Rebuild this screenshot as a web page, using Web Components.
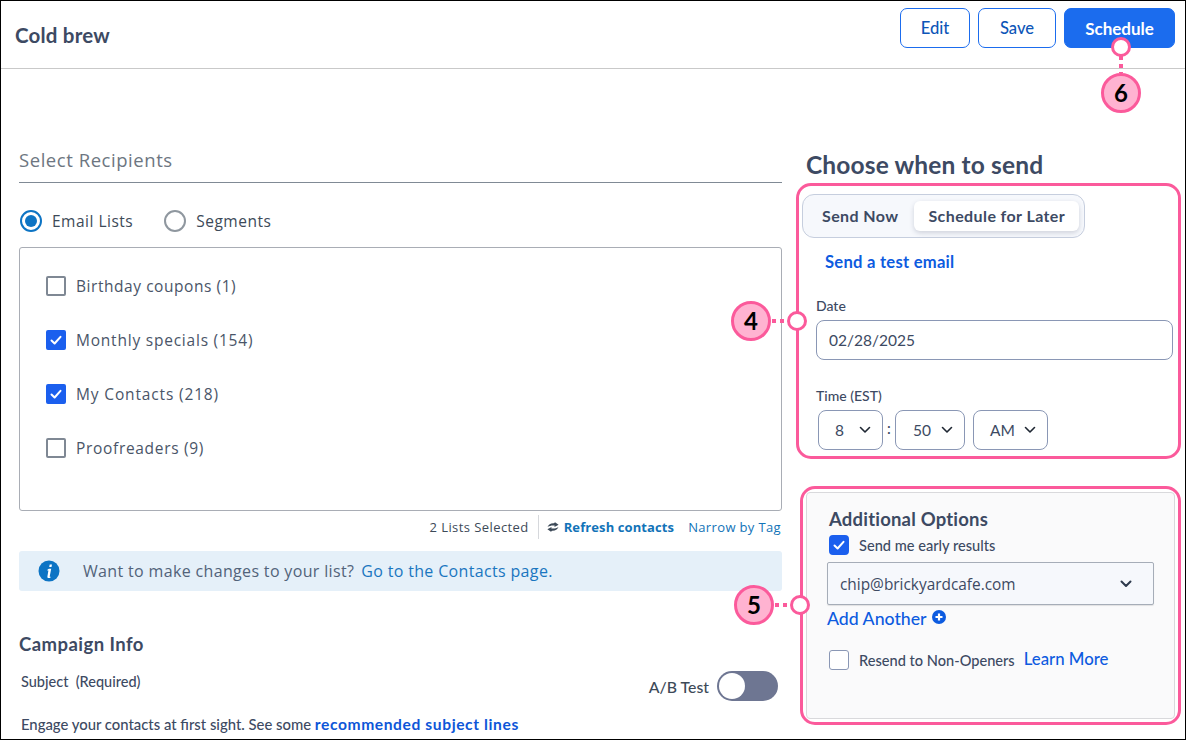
<!DOCTYPE html>
<html lang="en"><head><meta charset="utf-8"><title>Cold brew</title>
<style>
html,body{margin:0;padding:0;background:#fff}
body{width:1186px;height:740px;overflow:hidden;font-family:"Lato","Open Sans",sans-serif;color:#3d4a63}
</style></head><body>
<cc-app></cc-app>
<script>
const sans='"Lato","Open Sans",sans-serif', open='"Open Sans","Noto Sans",sans-serif';
function def(name,html){
  customElements.define(name,class extends HTMLElement{
    constructor(){super();this.attachShadow({mode:'open'}).innerHTML=html;}
  });
}
def('cc-button',`<style>
:host{display:inline-flex;align-items:center;justify-content:center;box-sizing:border-box;height:40px;border:1px solid #1b6cee;border-radius:7px;font:500 16.6px ${sans};color:#0d56b8;background:#fff;flex:none}
:host([primary]){background:#1b6cee;color:#fff;font-weight:700;font-size:17px}
</style><slot></slot>`);
def('cc-header',`<style>
:host{display:flex;align-items:flex-start;justify-content:space-between;box-sizing:border-box;height:68px;border-bottom:1px solid #c9c9c9;padding:7px 10px 0 14px}
.t{font:700 20.5px/40px ${sans};letter-spacing:.2px;color:#3d4a63;margin-top:7px}
.b{display:flex;gap:8px}
</style><div class="t"><slot name="title"></slot></div><div class="b"><slot></slot></div>`);
def('cc-check',`<style>
:host{display:inline-flex;align-items:center;gap:var(--gap,10px);font:var(--font,400 15.5px ${open});letter-spacing:var(--ls,.55px);color:var(--color,#4a5568)}
.b{box-sizing:border-box;width:20px;height:20px;border-radius:var(--r,2px);border:2px solid #7f8894;background:#fff;display:flex;align-items:center;justify-content:center;flex:none}
:host([on]) .b{background:#1b5fee;border-color:#1b5fee}
:host([soft]) .b{border:1px solid #8a97b5;border-radius:3px}
svg{display:none;width:14px;height:14px}:host([on]) svg{display:block}
</style><span class="b"><svg viewBox="0 0 14 14" fill="none" stroke="#fff" stroke-width="2" stroke-linecap="round" stroke-linejoin="round"><path d="M2.5 7.5 5.6 10.5 11.5 3.8"/></svg></span><span><slot></slot></span>`);
def('cc-radio',`<style>
:host{display:inline-flex;align-items:center;gap:10px;font:400 15.5px ${open};letter-spacing:.5px;color:#3d4a58}
.r{box-sizing:border-box;width:22px;height:22px;border-radius:50%;border:2px solid #8f979f;background:#fff;position:relative}
:host([on]) .r{border-color:#0d74c4}
:host([on]) .r::after{content:"";position:absolute;inset:3px;border-radius:50%;background:#0d74c4}
</style><span class="r"></span><span><slot></slot></span>`);
def('cc-recipients',`<style>
:host{display:block;width:763px}
h2{margin:0;font:400 18.5px/24px ${open};letter-spacing:.55px;color:#6d7681;padding-bottom:10px;border-bottom:1px solid #808a95}
.radios{display:flex;gap:31px;padding:25px 0 0 1px;height:26px;align-items:center}
.list{box-sizing:border-box;height:264px;margin-top:13px;border:1px solid #a9adb5;border-radius:3px;padding:28px 26px;display:flex;flex-direction:column;gap:34px}
.list ::slotted(cc-check){height:20px}
.meta{display:flex;justify-content:flex-end;align-items:center;height:24px;margin-top:4px;padding-right:1px;font:400 13px ${open};letter-spacing:.42px;color:#3d4a58}
.sep{width:1px;height:24px;background:#d6d8dc;margin:0 8px 0 9px}
.ref{display:flex;align-items:center;gap:5px;font-weight:700;letter-spacing:.1px;color:#1273b8;margin-right:14px}
.nar{color:#1273b8;letter-spacing:.36px}
.info{display:flex;align-items:center;height:40px;margin-top:12px;background:#e5f0f9;border-radius:3px;padding-left:19px;font:400 16px ${open};letter-spacing:.34px;color:#52637a}
.info svg{width:22px;height:22px;margin-right:23px}
.info a{color:#1a76c0;margin-left:7px}
</style>
<h2>Select Recipients</h2>
<div class="radios"><cc-radio on>Email Lists</cc-radio><cc-radio>Segments</cc-radio></div>
<div class="list"><slot></slot></div>
<div class="meta"><span>2 Lists Selected</span><span class="sep"></span>
<span class="ref"><svg width="12" height="10" viewBox="0 0 12 10" fill="#3d4a58"><path id="a" d="M.5 5C1.5 2.5 4 1 7 1.3L8 .2 11.6 2.8 7.5 5 7.6 3.6C5 3.2 3 3.6.5 5Z"/><path d="M11.5 5C10.5 7.5 8 9 5 8.7L4 9.8.4 7.2 4.5 5 4.4 6.4C7 6.8 9 6.4 11.5 5Z"/></svg>Refresh contacts</span>
<span class="nar">Narrow by Tag</span></div>
<div class="info"><svg viewBox="0 0 22 22"><circle cx="11" cy="11" r="10.5" fill="#0d74c4"/><path d="M11.7 4.6h2.3l-.5 2.3h-2.3ZM10.9 8.8h2.3l-1.5 7.6c-.1.5.3.5.9.3l-.2 1.1c-1.8.7-3.3.2-3-1.3l1-5.9-1 .1.2-1.3Z" fill="#fff"/></svg>Want to make changes to your list? <a>Go to the Contacts page.</a></div>`);
def('cc-campaign',`<style>
:host{display:block;width:763px;margin-top:41px}
h3{margin:0;font:700 18.5px/24px ${sans};letter-spacing:.45px;color:#3d4a63}
.row{display:flex;justify-content:space-between;align-items:center;height:30px;margin-top:15px;padding:0 4px 0 2px;font:500 14.5px ${sans};color:#3d4a63}
.row .l{margin-top:-10px}
.ab{display:flex;align-items:center;gap:8px;font:500 15.8px ${sans};color:#3d4a58}
.tg{box-sizing:border-box;width:61px;height:30px;border-radius:15px;background:#6e7692;padding:2px}
.tg i{display:block;width:26px;height:26px;border-radius:50%;background:#fff}
.hint{margin:13px 0 0 2px;font:500 14.85px/20px ${sans};color:#3d4a63}
.hint a{color:#0d56d8;font-weight:700;font-size:15.6px;letter-spacing:.6px}
</style><h3>Campaign Info</h3>
<div class="row"><span class="l">Subject&nbsp; (Required)</span><span class="ab">A/B Test<span class="tg"><i></i></span></span></div>
<p class="hint">Engage your contacts at first sight. See some <a>recommended subject lines</a></p>`);
def('cc-select',`<style>
:host{display:inline-flex;align-items:center;justify-content:space-between;box-sizing:border-box;height:40px;border:1px solid #8a97b5;border-radius:8px;font:400 15.5px ${sans};color:#3d4a63;padding:0 11px 0 var(--pl,16px);background:#fff;flex:none}
svg{width:12px;height:8px}
</style><slot></slot><svg viewBox="0 0 12 8" fill="none" stroke="#1f2733" stroke-width="1.6" stroke-linecap="round" stroke-linejoin="round"><path d="M1.5 1.5 6 6l4.5-4.5"/></svg>`);
def('cc-when',`<style>
:host{display:block;box-sizing:border-box;height:276px;border:3px solid #fb5a9b;border-radius:15px;padding:8px 5px 0 3px}
.seg{display:inline-flex;box-sizing:border-box;height:44px;width:283px;background:#f6f8fc;border:1px solid #c6cede;border-radius:12px;padding:6px;align-items:center;font:700 16px ${sans};letter-spacing:.4px;color:#3d4a63}
.seg span{height:30px;line-height:29px;padding:0 13px;white-space:nowrap}
.seg .on{background:#fff;border-radius:6px;box-shadow:0 2px 5px rgba(50,60,90,.2);margin-left:3px;padding:0 14px}
.test{display:block;margin:14px 0 0 23px;font:700 16.6px/20px ${sans};letter-spacing:.25px;color:#0d5be0}
label{display:block;font:500 14px/18px ${sans};color:#3d4a63;margin-left:14px}
.d{margin-top:25px}
.date{display:flex;align-items:center;box-sizing:border-box;margin:5px 0 0 14px;height:40px;border:1px solid #8a97b5;border-radius:8px;padding-left:12px;font:400 15.5px ${sans};color:#3d4a63}
.t{margin-top:27px}
.sel{display:flex;align-items:center;margin:5px 0 0 16px}
.sel span{width:12px;text-align:center;font:500 15px ${sans};margin-top:-4px}
</style>
<div class="seg"><span>Send Now</span><span class="on">Schedule for Later</span></div>
<a class="test">Send a test email</a>
<label class="d">Date</label><div class="date">02/28/2025</div>
<label class="t">Time (EST)</label>
<div class="sel"><cc-select style="width:65px">8</cc-select><span>:</span><cc-select style="width:70px;--pl:17px">50</cc-select><cc-select style="width:75px;margin-left:8px">AM</cc-select></div>`);
def('cc-options',`<style>
:host{display:block;box-sizing:border-box;height:239px;border:3px solid #fb5a9b;border-radius:15px;padding:3px;margin-top:27px}
.in{box-sizing:border-box;height:100%;background:#fafafb;border:1px solid #d9d9dc;border-radius:4px;padding:14px 20px 0 20px}
h3{margin:0 0 0 2px;font:700 18.5px/24px ${sans};letter-spacing:.2px;color:#3d4a63}
cc-check{--font:500 14.6px ${sans};--color:#3d4a63;--gap:10px;--ls:0;--r:4px}
.c1{margin:4px 0 0 2px;display:flex}
.drop{display:flex;align-items:center;justify-content:space-between;box-sizing:border-box;height:43px;margin-top:7px;background:#f6f8fc;border:1px solid #a6adb8;border-radius:2px;box-shadow:0 1px 1px rgba(0,0,0,.1);padding:0 21px 0 12px;font:400 15.4px ${open};color:#3d4a63}
.drop span{margin-top:2px}
.add{display:flex;align-items:center;gap:5px;margin-top:0;height:26px;font:500 17.7px ${sans};color:#0d5be0}
.add svg{width:14px;height:14px;margin-top:-3px}
.c2{display:flex;align-items:center;margin:19px 0 0 2px}
.c2 a{font:500 16.8px ${sans};color:#0d5be0;margin:-3px 0 0 9px}
</style><div class="in"><h3>Additional Options</h3>
<div class="c1"><cc-check on>Send me early results</cc-check></div>
<div class="drop"><span>chip@brickyardcafe.com</span><svg width="12" height="8" viewBox="0 0 12 8" fill="none" stroke="#2e3a4d" stroke-width="2" stroke-linecap="round" stroke-linejoin="round"><path d="M1.5 1.5 6 6l4.5-4.5"/></svg></div>
<div class="add">Add Another<svg viewBox="0 0 14 14"><circle cx="7" cy="7" r="7" fill="#0d5be0"/><path d="M7 3.5v7M3.5 7h7" stroke="#fff" stroke-width="2.2"/></svg></div>
<div class="c2"><cc-check soft>Resend to Non-Openers</cc-check><a>Learn More</a></div></div>`);
def('cc-callout',`<style>
:host{position:absolute;display:block;left:var(--x);top:var(--y);width:0;height:0;--p:#fb5a9b}
.n{position:absolute;box-sizing:border-box;left:var(--nx);top:var(--ny);width:40px;height:40px;margin:-20px;border-radius:50%;border:3px solid var(--p);background:#ffb3d1;color:#000;font:700 24px/34px ${sans};text-align:center}
.o{position:absolute;box-sizing:border-box;left:0;top:0;width:20px;height:20px;margin:-10px;border-radius:50%;border:3px solid var(--p);background:#fff}
.l{position:absolute}
:host([h]) .l{left:calc(var(--nx) + 20px);top:-2px;height:4px;width:calc(-1*var(--nx) - 28px);background:repeating-linear-gradient(90deg,transparent 0 1px,var(--p) 1px 5px,transparent 5px 8px)}
:host([v]) .l{top:8px;left:-2px;width:4px;height:calc(var(--ny) - 28px);background:repeating-linear-gradient(180deg,transparent 0 1px,var(--p) 1px 5px,transparent 5px 8px)}
</style><span class="l"></span><span class="o"></span><span class="n"><slot></slot></span>`);
def('cc-app',`<style>
:host{display:block;box-sizing:border-box;width:1186px;height:740px;border:1px solid #000;overflow:hidden;position:relative}
main{display:grid;grid-template-columns:763px 385px;column-gap:14px;padding:0 0 0 18px}
.left{padding-top:79px}
.right{padding-top:81px}
.right h1{margin:0 0 3px 10px;font:700 24.5px/30px ${sans};letter-spacing:.15px;color:#3d4a63}
.opts{margin-left:4px}
.l1{--ls:.78px}.l2{--ls:.85px}.l3{--ls:.68px}
</style>
<cc-header><span slot="title">Cold brew</span><cc-button style="width:70px">Edit</cc-button><cc-button style="width:78px">Save</cc-button><cc-button primary style="width:111px">Schedule</cc-button></cc-header>
<main><div class="left">
<cc-recipients><cc-check>Birthday coupons (1)</cc-check><cc-check on class="l1">Monthly specials (154)</cc-check><cc-check on class="l2">My Contacts (218)</cc-check><cc-check class="l3">Proofreaders (9)</cc-check></cc-recipients>
<cc-campaign></cc-campaign></div>
<div class="right"><h1>Choose when to send</h1><cc-when></cc-when><div class="opts"><cc-options></cc-options></div></div></main>
<cc-callout v style="--x:1120px;--y:46px;--nx:0px;--ny:46px">6</cc-callout>
<cc-callout h style="--x:796px;--y:320px;--nx:-46px;--ny:0px">4</cc-callout>
<cc-callout h style="--x:799px;--y:604px;--nx:-46px;--ny:0px">5</cc-callout>`);
</script></body></html>
